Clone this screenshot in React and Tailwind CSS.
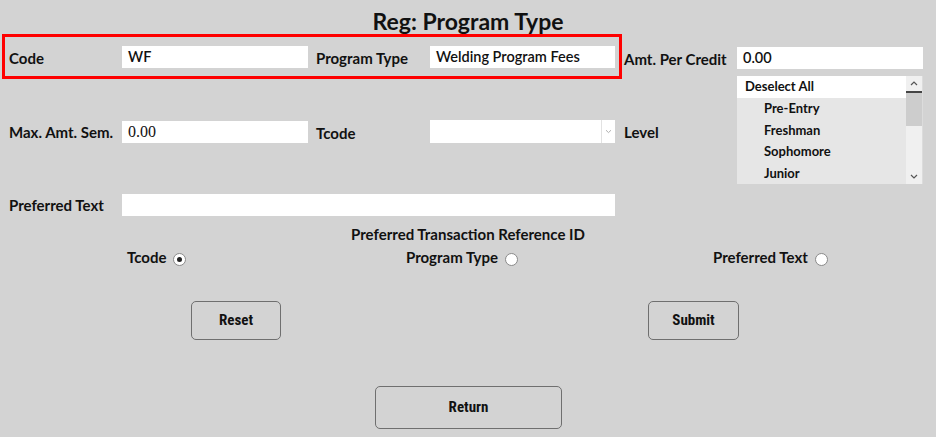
import React from "react";

const Label = ({ children, className = "" }) => (
  <label className={"shrink-0 font-bold text-[15px] leading-[20px] " + className}>
    {children}
  </label>
);

const TextBox = ({ value, className = "", serif = false }) => (
  <div
    className={
      "h-[22px] bg-white flex items-center pl-[6px] " +
      (serif
        ? "[font-family:'Liberation_Serif',serif] font-normal text-[16px] "
        : "font-semibold text-[14.5px] ") +
      className
    }
  >
    {value}
  </div>
);

const Radio = ({ checked }) => (
  <span className="ml-[7px] mt-[6px] w-[13px] h-[13px] rounded-full bg-white border border-[#8a8a8a] flex items-center justify-center">
    {checked && <span className="w-[5px] h-[5px] rounded-full bg-[#222]" />}
  </span>
);

const Btn = ({ children, className = "" }) => (
  <button
    className={
      "border border-[#6f6f6f] rounded-[5px] bg-[#d3d3d3] font-['Liberation_Sans_Narrow','Roboto_Condensed',Roboto,sans-serif] font-bold text-[15px] text-[#111] " +
      className
    }
  >
    {children}
  </button>
);

export default function App() {
  const levels = ["Pre-Entry", "Freshman", "Sophomore", "Junior"];

  return (
    <div className="w-[936px] h-[437px] overflow-hidden bg-[#d3d3d3] text-[#111] font-['Lato','Noto_Sans',sans-serif]">
      <h1 className="pt-[8px] text-center text-[23px] leading-[26px] font-bold">
        Reg: Program Type
      </h1>

      <div className="flex">
        {/* left column */}
        <div className="w-[624px] shrink-0">
          <div className="ml-[2px] w-[620px] h-[45px] border-[3px] border-[#ff0000] flex items-center pl-[4px]">
            <Label className="w-[113px] pt-[3px]">Code</Label>
            <TextBox value="WF" className="w-[186px]" />
            <Label className="w-[114px] ml-[8px] pt-[3px]">Program Type</Label>
            <TextBox value="Welding Program Fees" className="w-[185px]" />
          </div>

          <div className="flex items-center mt-[41px] pl-[9px]">
            <Label className="w-[113px]">Max. Amt. Sem.</Label>
            <TextBox value="0.00" serif className="w-[186px]" />
            <Label className="w-[114px] ml-[8px] pt-[2px]">Tcode</Label>
            <div className="w-[185px] h-[23px] bg-white flex justify-end">
              <div className="w-[14px] border-l border-[#e2e2e2] flex items-center justify-center">
                <svg width="7" height="5" viewBox="0 0 7 5">
                  <path d="M1 1.2 L3.5 3.6 L6 1.2" fill="none" stroke="#b0b0b0" strokeWidth="1" />
                </svg>
              </div>
            </div>
          </div>

          <div className="flex items-center mt-[51px] pl-[9px]">
            <Label className="w-[113px]">Preferred Text</Label>
            <TextBox value="" className="w-[493px]" />
          </div>
        </div>

        {/* right column */}
        <div className="flex-1">
          <div className="flex items-center mt-[12px]">
            <Label className="w-[113px] pt-[3px]">Amt. Per Credit</Label>
            <TextBox value="0.00" className="w-[186px]" />
          </div>
          <div className="flex items-center mt-[7px]">
            <Label className="w-[113px] pt-[4px]">Level</Label>
            <div className="w-[186px] h-[108px] flex bg-[#e6e6e6]">
              <div className="w-[169px]">
                <div className="h-[22px] bg-white pl-[8px] flex items-center text-[13px] font-bold">
                  Deselect All
                </div>
                {levels.map((l) => (
                  <div key={l} className="h-[21.5px] pl-[27px] flex items-center text-[13px] font-bold">
                    {l}
                  </div>
                ))}
              </div>
              <div className="w-[17px] flex flex-col bg-[#f0f0f0] border-r border-[#dcdcdc]">
                <div className="h-[17px] flex items-center justify-center border-b-2 border-[#444] bg-[#f0f0f0]">
                  <svg width="8" height="5" viewBox="0 0 8 5">
                    <path d="M1 4 L4 1 L7 4" fill="none" stroke="#555" strokeWidth="1.2" />
                  </svg>
                </div>
                <div className="h-[33px] bg-[#cdcdcd]" />
                <div className="flex-1" />
                <div className="h-[16px] flex items-center justify-center">
                  <svg width="8" height="5" viewBox="0 0 8 5">
                    <path d="M1 1 L4 4 L7 1" fill="none" stroke="#555" strokeWidth="1.2" />
                  </svg>
                </div>
              </div>
            </div>
          </div>
        </div>
      </div>

      <div className="mt-[8px] text-center font-bold text-[15px] leading-[20px]">
        Preferred Transaction Reference ID
      </div>

      <div className="flex mt-[3px] pl-[127px]">
        <div className="w-[279px] flex">
          <Label>Tcode</Label>
          <Radio checked />
        </div>
        <div className="w-[307px] flex">
          <Label>Program Type</Label>
          <Radio />
        </div>
        <div className="flex">
          <Label>Preferred Text</Label>
          <Radio />
        </div>
      </div>

      <div className="flex mt-[34px]">
        <Btn className="ml-[191px] w-[90px] h-[39px]">Reset</Btn>
        <Btn className="ml-[367px] w-[91px] h-[39px]">Submit</Btn>
      </div>

      <div className="flex mt-[46px]">
        <Btn className="ml-[375px] w-[187px] h-[43px]">Return</Btn>
      </div>
    </div>
  );
}
